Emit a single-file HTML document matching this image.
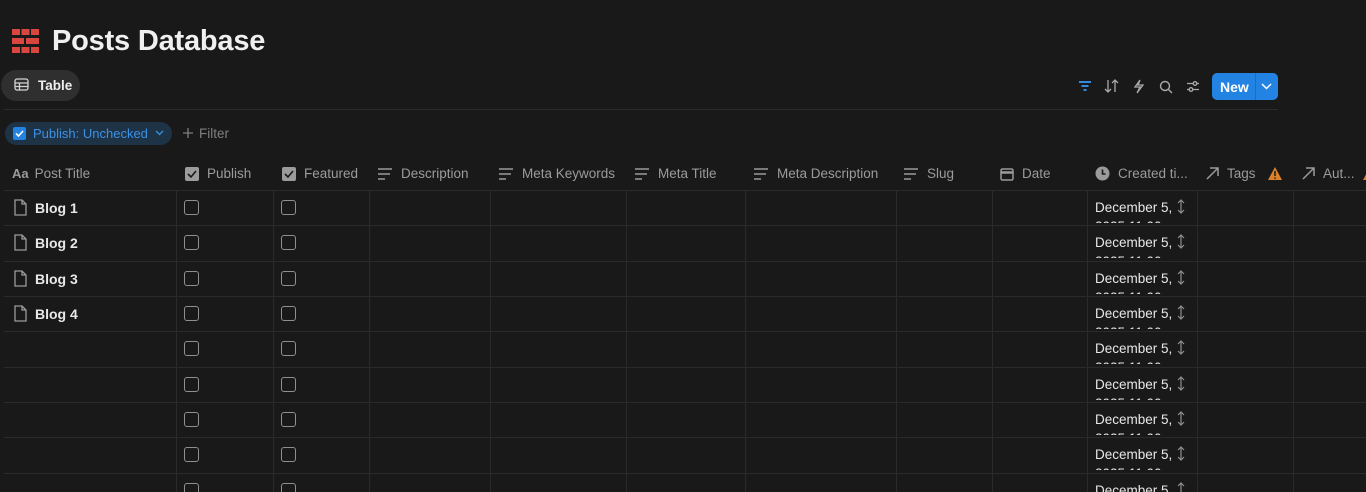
<!DOCTYPE html><html style="overflow:hidden;height:492px"><head><style>
*{margin:0;padding:0;box-sizing:border-box}
body{width:1366px;height:492px;background:#191919;font-family:"Liberation Sans",sans-serif;color:#d4d4d4;overflow:hidden;position:relative}
.a{position:absolute}
.h{position:absolute;top:157px;height:33px;display:flex;align-items:center;font-size:13.5px;color:#9b9b9b;white-space:nowrap}
.h svg{margin-right:8px}
.vl{position:absolute;top:190px;bottom:0;width:1px;background:#2a2a2a}
.hl{position:absolute;left:4px;right:0;height:1px;background:#2a2a2a}
.cb{position:absolute;width:15px;height:15px;border:1.3px solid #8f8f8f;border-radius:3px}
.t{position:absolute;left:35px;font-size:14px;font-weight:bold;color:#e8e8e8}
.d{position:absolute;left:1095px;width:80px;height:25px;overflow:hidden;font-size:13.5px;color:#e8e8e8;line-height:19px;white-space:nowrap}
</style></head><body>
<svg class="a" style="left:12px;top:29px" width="27" height="24" viewBox="0 0 27 24"><g fill="#d9463f"><rect x="0" y="0" width="8" height="6"/><rect x="9.5" y="0" width="8" height="6"/><rect x="19" y="0" width="8" height="6"/><rect x="0" y="9" width="12" height="6"/><rect x="14" y="9" width="13" height="6"/><rect x="0" y="18" width="8" height="6"/><rect x="9.5" y="18" width="8" height="6"/><rect x="19" y="18" width="8" height="6"/></g></svg>
<div class="a" style="left:52px;top:25px;font-size:29px;font-weight:bold;color:#f0f0f0;letter-spacing:-0.2px">Posts Database</div>
<div class="a" style="left:1px;top:70px;width:79px;height:31px;border-radius:16px;background:#2f2f2f"></div>
<svg class="a" style="left:14px;top:78px" width="15" height="13" viewBox="0 0 15 13" fill="none" stroke="#d4d4d4" stroke-width="1.3"><rect x="1" y="1" width="13" height="11" rx="2"/><path d="M1 5h13M1 8.5h13M5.5 5v7"/></svg>
<div class="a" style="left:38px;top:78px;font-size:13.5px;font-weight:bold;color:#eee">Table</div>
<div class="a" style="left:4px;top:109px;width:1274px;height:1px;background:#2c2c2c"></div>
<svg class="a" style="left:1078px;top:80px" width="14" height="12" viewBox="0 0 14 12" stroke="#2f8ae0" stroke-width="2"><path d="M1 2h12M3.5 6h7M5.5 10h3"/></svg>
<svg class="a" style="left:1104px;top:79px" width="15" height="14" viewBox="0 0 15 14" fill="none" stroke="#aaa" stroke-width="1.3"><path d="M4 1v12M1 10l3 3 3-3M11 13V1M8 4l3-3 3 3"/></svg>
<svg class="a" style="left:1133px;top:79px" width="11" height="15" viewBox="0 0 11 15" fill="none" stroke="#aaa" stroke-width="1.3"><path d="M7 1L2 8h5l-3 6 6-8H5z"/></svg>
<svg class="a" style="left:1159px;top:80px" width="14" height="14" viewBox="0 0 14 14" fill="none" stroke="#aaa" stroke-width="1.4"><circle cx="6" cy="6" r="4.5"/><path d="M9.5 9.5L13 13"/></svg>
<svg class="a" style="left:1186px;top:80px" width="14" height="13" viewBox="0 0 14 13" fill="none" stroke="#aaa" stroke-width="1.3"><path d="M1 3.5h12M1 9.5h12"/><circle cx="9" cy="3.5" r="1.8" fill="#191919"/><circle cx="5" cy="9.5" r="1.8" fill="#191919"/></svg>
<div class="a" style="left:1212px;top:73px;width:66px;height:27px;border-radius:5px;background:#2383e2"></div>
<div class="a" style="left:1255px;top:73px;width:1px;height:27px;background:#1a6fc4"></div>
<div class="a" style="left:1220px;top:79px;font-size:14px;font-weight:bold;color:#fff">New</div>
<svg class="a" style="left:1261px;top:83px" width="11" height="7" viewBox="0 0 11 7" fill="none" stroke="#fff" stroke-width="1.5"><path d="M1 1l4.5 4.5L10 1"/></svg>
<div class="a" style="left:5px;top:122px;width:167px;height:23px;border-radius:12px;background:#1f3347"></div>
<div class="a" style="left:13px;top:127px;width:13px;height:13px;border-radius:2px;background:#2383e2"></div>
<svg class="a" style="left:14px;top:128px" width="11" height="11" viewBox="0 0 11 11" fill="none" stroke="#fff" stroke-width="1.6"><path d="M2 5.5l2.5 2.5L9 3"/></svg>
<div class="a" style="left:33px;top:126px;font-size:13px;color:#3b91e6">Publish: Unchecked</div>
<svg class="a" style="left:155px;top:130px" width="9" height="6" viewBox="0 0 9 6" fill="none" stroke="#3b91e6" stroke-width="1.3"><path d="M1 1l3.5 3.5L8 1"/></svg>
<svg class="a" style="left:183px;top:128px" width="10" height="10" stroke="#7f7f7f" stroke-width="1.3"><path d="M5 0v10M0 5h10"/></svg>
<div class="a" style="left:199px;top:126px;font-size:13.5px;color:#7f7f7f">Filter</div>
<div class="h" style="left:12px"><span style="font-weight:bold;font-size:13px;margin-right:6px;color:#9b9b9b">Aa</span>Post Title</div>
<div class="h" style="left:185px"><svg width="14" height="14"><rect width="14" height="14" rx="2" fill="#9b9b9b"/><path d="M3 7l3 3 5-6" stroke="#191919" stroke-width="1.6" fill="none"/></svg>Publish</div>
<div class="h" style="left:282px"><svg width="14" height="14"><rect width="14" height="14" rx="2" fill="#9b9b9b"/><path d="M3 7l3 3 5-6" stroke="#191919" stroke-width="1.6" fill="none"/></svg>Featured</div>
<div class="h" style="left:378px"><svg width="15" height="12" stroke="#9b9b9b" stroke-width="1.5"><path d="M0 1h14M0 6h12M0 11h7"/></svg>Description</div>
<div class="h" style="left:499px"><svg width="15" height="12" stroke="#9b9b9b" stroke-width="1.5"><path d="M0 1h14M0 6h12M0 11h7"/></svg>Meta Keywords</div>
<div class="h" style="left:635px"><svg width="15" height="12" stroke="#9b9b9b" stroke-width="1.5"><path d="M0 1h14M0 6h12M0 11h7"/></svg>Meta Title</div>
<div class="h" style="left:754px"><svg width="15" height="12" stroke="#9b9b9b" stroke-width="1.5"><path d="M0 1h14M0 6h12M0 11h7"/></svg>Meta Description</div>
<div class="h" style="left:904px"><svg width="15" height="12" stroke="#9b9b9b" stroke-width="1.5"><path d="M0 1h14M0 6h12M0 11h7"/></svg>Slug</div>
<div class="h" style="left:1000px"><svg width="14" height="14" fill="none" stroke="#9b9b9b" stroke-width="1.5"><rect x="1" y="2" width="12" height="11" rx="1.5"/><path d="M1 5.5h12" stroke-width="2.5"/></svg>Date</div>
<div class="h" style="left:1095px"><svg width="15" height="15"><circle cx="7.5" cy="7.5" r="7" fill="#9b9b9b"/><path d="M7.5 3.5v4.5h3" stroke="#191919" stroke-width="1.6" fill="none"/></svg>Created ti...</div>
<div class="h" style="left:1206px"><svg width="13" height="13" fill="none" stroke="#9b9b9b" stroke-width="1.5"><path d="M1 12L12 1M4 1h8v8"/></svg>Tags<svg style="margin-left:12px" width="14" height="13"><path d="M7 0L14 13H0z" fill="#d9822b"/><path d="M7 4v5M7 10.5v1.2" stroke="#191919" stroke-width="1.5"/></svg></div>
<div class="h" style="left:1302px"><svg width="13" height="13" fill="none" stroke="#9b9b9b" stroke-width="1.5"><path d="M1 12L12 1M4 1h8v8"/></svg>Aut...<svg style="margin-left:8px" width="14" height="13"><path d="M7 0L14 13H0z" fill="#d9822b"/></svg></div>
<div class="hl" style="top:190px"></div><div class="hl" style="top:225px"></div><div class="hl" style="top:261px"></div><div class="hl" style="top:296px"></div><div class="hl" style="top:331px"></div><div class="hl" style="top:367px"></div><div class="hl" style="top:402px"></div><div class="hl" style="top:437px"></div><div class="hl" style="top:473px"></div>
<div class="vl" style="left:176px"></div><div class="vl" style="left:273px"></div><div class="vl" style="left:369px"></div><div class="vl" style="left:490px"></div><div class="vl" style="left:626px"></div><div class="vl" style="left:745px"></div><div class="vl" style="left:896px"></div><div class="vl" style="left:992px"></div><div class="vl" style="left:1087px"></div><div class="vl" style="left:1197px"></div><div class="vl" style="left:1293px"></div>
<svg class="a" style="left:14px;top:199px" width="13" height="17" fill="none" stroke="#9b9b9b" stroke-width="1.3"><path d="M1 1h7l4 4v11H1zM8 1v4h4"/></svg><div class="t" style="top:200px">Blog 1</div>
<svg class="a" style="left:14px;top:234px" width="13" height="17" fill="none" stroke="#9b9b9b" stroke-width="1.3"><path d="M1 1h7l4 4v11H1zM8 1v4h4"/></svg><div class="t" style="top:235px">Blog 2</div>
<svg class="a" style="left:14px;top:270px" width="13" height="17" fill="none" stroke="#9b9b9b" stroke-width="1.3"><path d="M1 1h7l4 4v11H1zM8 1v4h4"/></svg><div class="t" style="top:271px">Blog 3</div>
<svg class="a" style="left:14px;top:305px" width="13" height="17" fill="none" stroke="#9b9b9b" stroke-width="1.3"><path d="M1 1h7l4 4v11H1zM8 1v4h4"/></svg><div class="t" style="top:306px">Blog 4</div>
<div id="rows"></div>
<script>
var tops=[190,225,261,296,331,367,402,437,473],h='';
tops.forEach(function(t){
h+='<div class="cb" style="left:184px;top:'+(t+10)+'px"></div><div class="cb" style="left:281px;top:'+(t+10)+'px"></div>';
h+='<div class="d" style="top:'+(t+8)+'px">December 5,<br>2025 11:00</div>';
h+='<svg class="a" style="left:1177px;top:'+(t+9)+'px" width="8" height="15" fill="none" stroke="#8f8f8f" stroke-width="1.2"><path d="M4 1v13M1 4l3-3 3 3M1 11l3 3 3-3"/></svg>';
});
document.getElementById('rows').innerHTML=h;
</script>
</body></html>
